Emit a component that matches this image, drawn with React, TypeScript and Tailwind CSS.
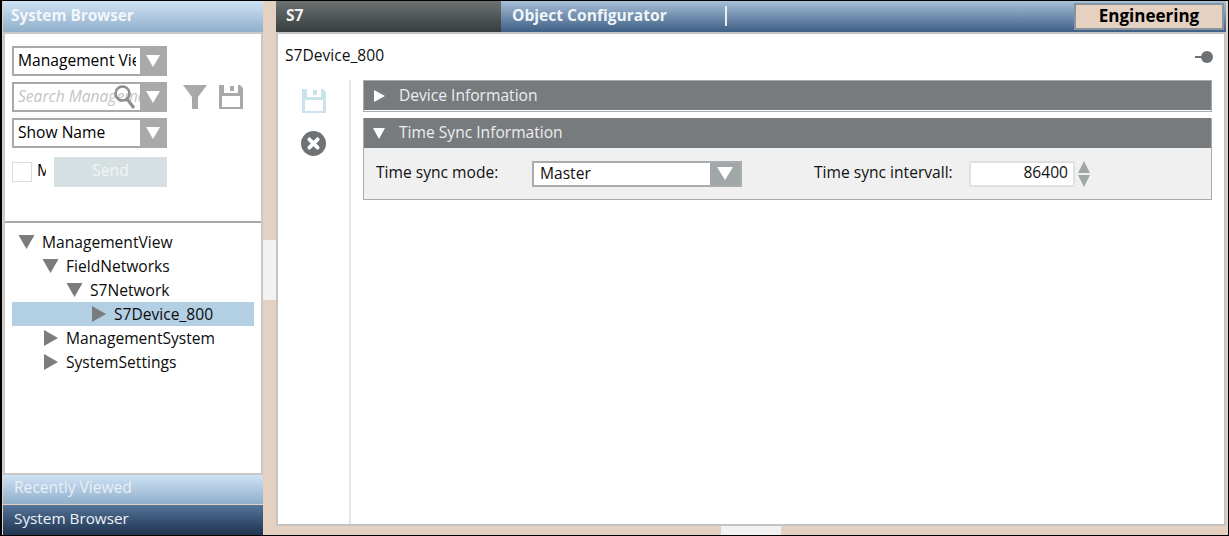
import React from "react";

const font = "font-['Open_Sans','Noto_Sans',sans-serif]";

function Combo({ text, className, italic, clip }: { text: string; className?: string; italic?: boolean; clip?: boolean }) {
  return (
    <div className={`flex h-[30px] w-[155px] border-2 border-[#a9a9a9] bg-white ${className ?? ""}`}>
      <div className={`min-w-0 flex-1 ${clip ? "pr-[4px]" : ""}`}>
        <div className={`overflow-hidden whitespace-nowrap pl-[4px] text-[15.6px] leading-[24px] ${italic ? "italic text-[#c4c4c4]" : "text-black"}`}>{text}</div>
      </div>
      <div className="flex w-[25px] shrink-0 items-center justify-center bg-[#a9a9a9]">
        <svg width="16" height="14" viewBox="0 0 16 14"><path d="M1 1h14L8 13z" fill="#fff" /></svg>
      </div>
    </div>
  );
}

function Tree({ depth, open, text, selected }: { depth: number; open: boolean; text: string; selected?: boolean }) {
  return (
    <div className={`flex h-6 items-center ${selected ? "bg-[#b3cfe3]" : ""}`} style={{ paddingLeft: 6 + depth * 24 }}>
      <div className="flex w-[24px] shrink-0">
        {open ? (
          <svg width="18" height="15" viewBox="0 0 18 15" className="-mt-px"><path d="M0.5 1h16L8.5 15z" fill="#7a7c7d" /></svg>
        ) : (
          <svg width="15" height="18" viewBox="0 0 15 18" className="ml-[2px]"><path d="M0 1v16l14-8z" fill="#7a7c7d" /></svg>
        )}
      </div>
      <span className="-mt-px whitespace-nowrap text-[15.6px] leading-6 text-[#0c0c0c]">{text}</span>
    </div>
  );
}

function Save({ color }: { color: string }) {
  return (
    <svg width="24" height="24" viewBox="0 0 24 24">
      <path fillRule="evenodd" fill={color} d="M0 0h5v8h14V0h2l3 3v21H0zM3 11v11h18V11z" />
      <path fill={color} d="M11 1h4v5h-4z" />
    </svg>
  );
}

function Panel({ title, open, children }: { title: string; open: boolean; children?: React.ReactNode }) {
  return (
    <div className={`border border-[#a8aaab] ${open ? "mt-[6px] border-t-0 bg-[#f0f0f0]" : "bg-white"}`}>
      <div className={`flex items-center bg-[#787b7d] pl-[9px] ${open ? "h-[30px]" : "mb-[1px] h-[29px]"}`}>
        <div className="flex w-[26px] shrink-0">
          {open ? (
            <svg width="12" height="11" viewBox="0 0 12 11"><path d="M0 0h12L6 11z" fill="#fff" /></svg>
          ) : (
            <svg width="11" height="12" viewBox="0 0 11 12" className="ml-[1px]"><path d="M0 0v12l11-6z" fill="#fff" /></svg>
          )}
        </div>
        <span className="text-[15.6px] text-[#eceeef]">{title}</span>
      </div>
      {children}
    </div>
  );
}

export default function App() {
  return (
    <div className={`${font} flex h-[536px] w-[1229px] overflow-hidden border-y border-l-2 border-r border-black bg-[#e4d1c2]`}>
      <div className="ml-px flex w-[260px] shrink-0 flex-col">
        <div className="flex h-[31px] shrink-0 items-center bg-gradient-to-b from-[#cfe2f5] to-[#90afca] pb-[3px] pl-[8px] text-[15.3px] font-bold text-[#f2f6fa]">System Browser</div>
        <div className="flex min-h-0 flex-1 flex-col border-2 border-[#c8c8c8] bg-white">
          <div className="h-[189px] shrink-0 border-b-2 border-[#a9a9a9] pl-[7px] pt-[12px]">
            <Combo text="Management View" clip />
            <div className="mt-[6px] flex items-center">
              <div className="relative">
                <Combo text="Search Management" italic />
                <svg width="24" height="26" viewBox="0 0 24 26" className="absolute left-[101px] top-[2px]">
                  <circle cx="9.5" cy="9.5" r="7" fill="none" stroke="#8d8d8d" strokeWidth="2.5" />
                  <path d="M14 15l7 9" stroke="#8d8d8d" strokeWidth="3" />
                </svg>
              </div>
              <svg width="24" height="24" viewBox="0 0 24 24" className="ml-[16px]"><path d="M0 0h24L15 12v12H9V12z" fill="#a9a9a9" /></svg>
              <div className="ml-[12px] flex"><Save color="#a9a9a9" /></div>
            </div>
            <Combo text="Show Name" className="mt-[6px]" />
            <div className="mt-[9px] flex items-center">
              <div className="h-[20px] w-[20px] border border-[#dcdce0] bg-white" />
              <div className="ml-[5px] w-[9px] overflow-hidden pb-[3px] text-[15.6px] text-black">M</div>
              <div className="ml-[8px] flex h-[30px] w-[113px] items-center justify-center bg-[#d6e0e2] pb-[3px] text-[15.6px] text-[#f2f5f5]">Send</div>
            </div>
          </div>
          <div className="flex-1 px-[7px] pt-[7px]">
            <Tree depth={0} open text="ManagementView" />
            <Tree depth={1} open text="FieldNetworks" />
            <Tree depth={2} open text="S7Network" />
            <Tree depth={3} open={false} text="S7Device_800" selected />
            <Tree depth={1} open={false} text="ManagementSystem" />
            <Tree depth={1} open={false} text="SystemSettings" />
          </div>
        </div>
        <div className="flex h-[29px] shrink-0 items-center bg-gradient-to-b from-[#cfe2f5] to-[#90afca] pb-[4px] pl-[11px] text-[15.6px] text-[#e8f0f7]">Recently Viewed</div>
        <div className="mt-px flex h-[30px] shrink-0 items-center bg-gradient-to-b from-[#54749a] to-[#1f3550] pb-[3px] pl-[11px] text-[15.3px] text-[#eef2f6]">System Browser</div>
      </div>

      <div className="flex w-[13px] shrink-0 items-center pt-[3px]">
        <div className="h-[60px] w-full bg-[#f2f2f2]" />
      </div>

      <div className="flex w-[950px] shrink-0 flex-col">
        <div className="flex h-[31px] shrink-0 items-stretch bg-gradient-to-b from-[#a8c0d8] to-[#3e5f85]">
          <div className="flex w-[225px] items-center bg-gradient-to-b from-[#6d7272] to-[#383d3d] pb-[2px] pl-[10px] text-[15.6px] font-bold text-[#f2f2f2]">S7</div>
          <div className="ml-[11px] flex items-center pb-[2px] text-[15.6px] font-bold text-[#f0f4f8]">Object Configurator</div>
          <div className="ml-[58px] mt-[5px] h-[20px] w-[2px] bg-[#e8edf2]" />
          <div className="ml-auto mr-[2px] mt-[2px] flex h-[27px] w-[150px] items-center justify-center border-2 border-[#87939e] bg-[#e4d1c2] pb-[1px] text-[17px] font-bold text-black">Engineering</div>
        </div>
        <div className="flex min-h-0 flex-1 flex-col border-2 border-[#c4c4c4] bg-white">
          <div className="flex h-[46px] shrink-0 items-center justify-between pl-[7px] pr-[10px]">
            <span className="-mt-[2px] text-[15.6px] text-[#111]">S7Device_800</span>
            <svg width="19" height="14" viewBox="0 0 19 14"><rect x="0" y="6" width="8" height="2" fill="#6f7274" /><circle cx="12" cy="7" r="6" fill="#6f7274" /></svg>
          </div>
          <div className="flex min-h-0 flex-1">
            <div className="flex w-[73px] shrink-0 flex-col items-center border-r-2 border-[#e2e6e8] pt-[9px]">
              <Save color="#c9e2ec" />
              <svg width="25" height="25" viewBox="0 0 24 24" className="mt-[18px]">
                <circle cx="12" cy="12" r="12" fill="#6f7274" />
                <path d="M8 8l8 8M16 8l-8 8" stroke="#fff" strokeWidth="3.6" strokeLinecap="round" />
              </svg>
            </div>
            <div className="ml-[12px] w-[849px] shrink-0">
              <Panel title="Device Information" open={false} />
              <Panel title="Time Sync Information" open>
                <div className="flex h-[51px] items-center text-[15.6px] text-[#111]">
                  <span className="-mt-[1px] ml-[12px] w-[156px] shrink-0 whitespace-nowrap">Time sync mode:</span>
                  <div className="flex h-[26px] w-[210px] shrink-0 border-2 border-[#a8acae] bg-white">
                    <span className="flex-1 pl-[6px] leading-[21px]">Master</span>
                    <div className="flex w-[30px] items-center justify-center bg-[#a1a6a8]">
                      <svg width="16" height="13" viewBox="0 0 16 13"><path d="M0 0h16L8 13z" fill="#fff" /></svg>
                    </div>
                  </div>
                  <span className="-mt-[1px] ml-[72px] w-[155px] shrink-0 whitespace-nowrap">Time sync intervall:</span>
                  <div className="flex h-[26px] w-[106px] shrink-0 items-center justify-end rounded-[2px] border-2 border-[#e0e0e0] bg-white pb-[2px] pr-[5px]">86400</div>
                  <svg width="14" height="26" viewBox="0 0 14 26" className="ml-[2px]">
                    <path d="M7 0l6 12H1z" fill="#a1a6a8" />
                    <path d="M1 14h12L7 26z" fill="#a1a6a8" />
                  </svg>
                </div>
              </Panel>
            </div>
          </div>
        </div>
        <div className="flex h-[9px] shrink-0 justify-center">
          <div className="h-full w-[60px] bg-[#f2f2f2]" />
        </div>
      </div>
    </div>
  );
}
